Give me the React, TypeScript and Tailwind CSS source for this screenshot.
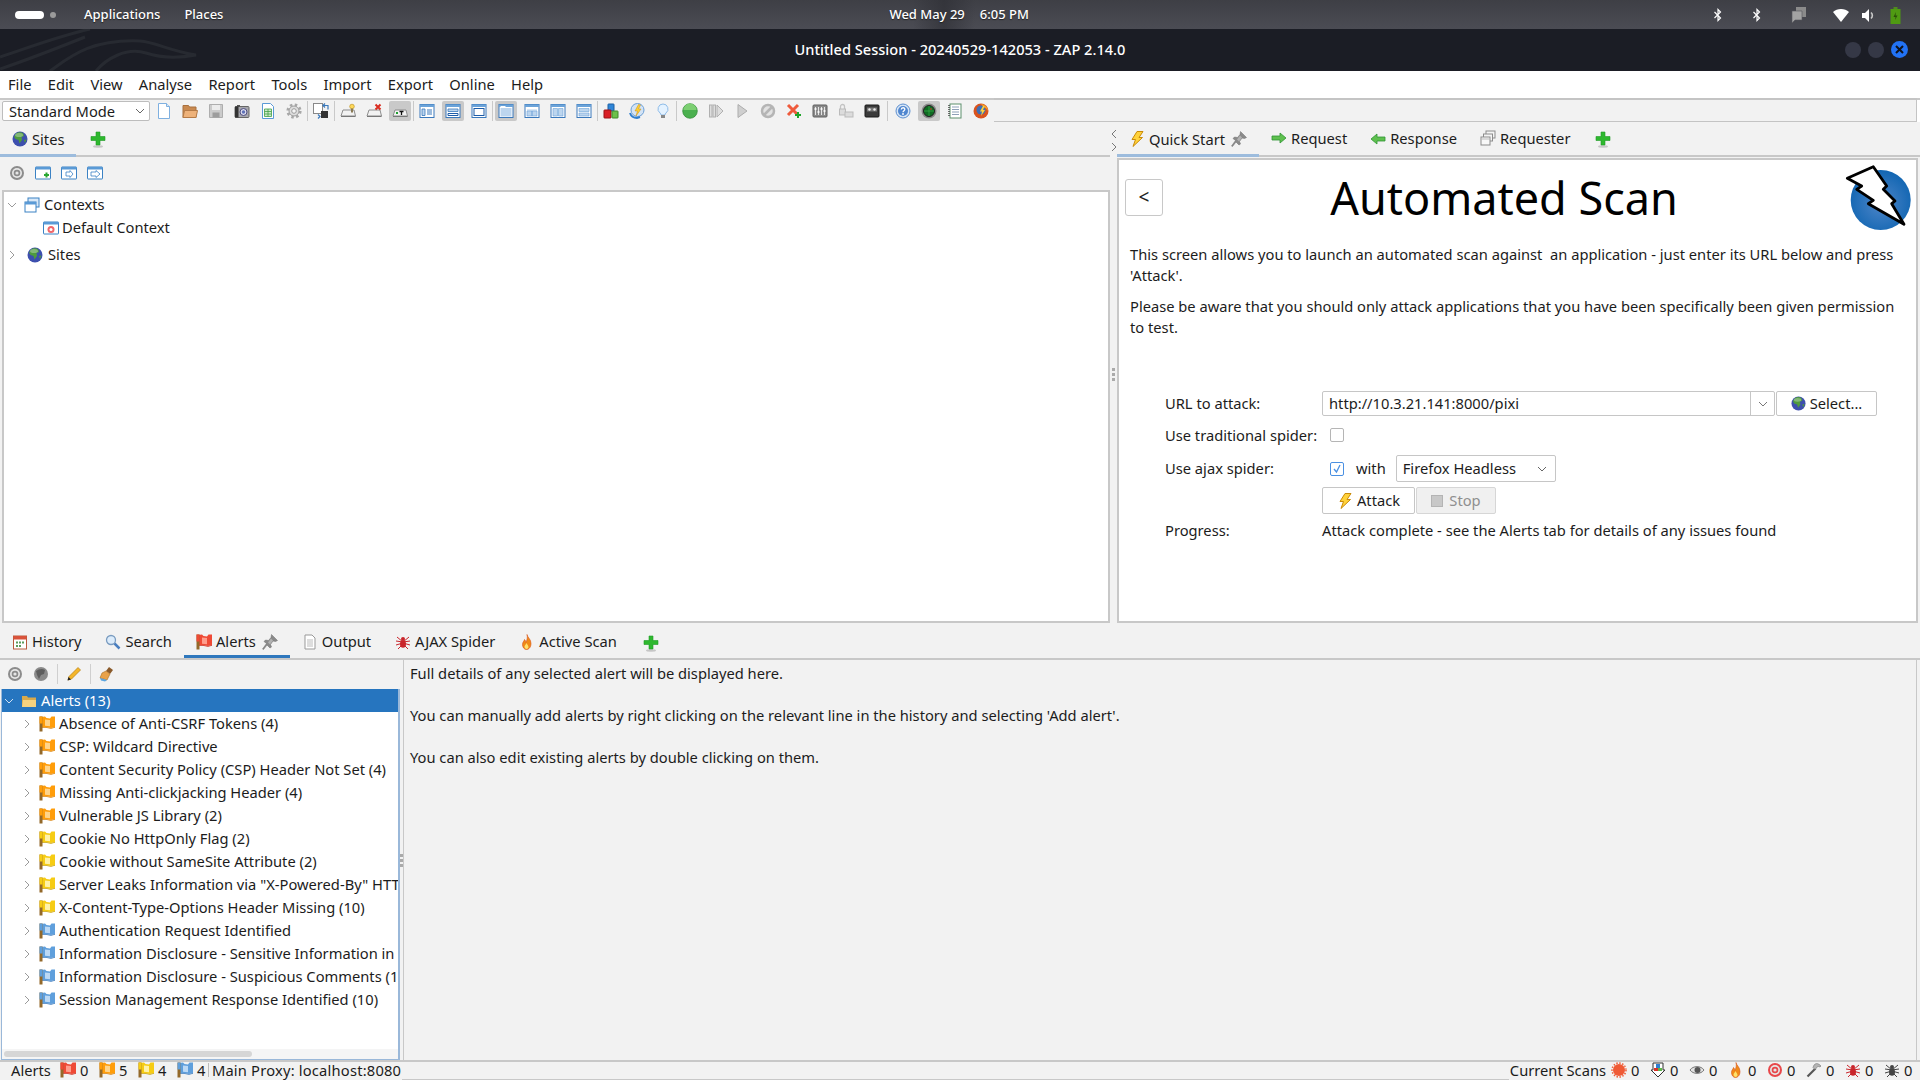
import type { ReactNode } from "react";

const Svg = ({ s = 16, children }: { s?: number; children: ReactNode }) => (
  <svg width={s} height={s} viewBox="0 0 16 16" className="shrink-0">
    {children}
  </svg>
);

const Flag = ({ c, d, pale }: { c: string; d: string; pale: string }) => (
  <Svg>
    <path d="M2 1L6 .5 7.500 2 11 2.500 12.500.5 16 .5V11l-4 1-5.500-1L2 11z" fill={c} />
    <path d="M6 3.500L11 4v6.300L6 9.700z" fill={pale} />
    <path d="M2 11l4.500 0 5.500 1 4-1v.8l-4 1-5.500-1H2z" fill={d} />
    <rect x=".5" y=".5" width="3" height="15" fill="#93692a" />
    <rect x=".5" y=".5" width="3" height="7" fill={c} />
  </Svg>
);

const Globe = ({ s = 16 }: { s?: number }) => (
  <Svg s={s}>
    <circle cx="8" cy="8" r="7.500" fill="#3d4fae" />
    <path d="M4 2.500c2-1.500 5-1.800 7-.5l1 3-2.500 1 .5 3-2.500 3.500-1-3.500-3-1-1.500-2.500z" fill="#4f9b3d" />
    <path d="M12 9l2.500-.5-1.500 3.500z" fill="#4f9b3d" />
    <ellipse cx="7" cy="4" rx="4" ry="2" fill="#fff" opacity=".3" />
  </Svg>
);

const Plus = () => (
  <svg width="16" height="17" viewBox="0 0 16 17" className="shrink-0">
    <ellipse cx="8" cy="15.500" rx="5" ry="1.200" fill="#999" opacity=".5" />
    <path d="M6 1h4v4.500h5v4h-5V14H6V9.500H1v-4h5z" fill="#2eb82e" stroke="#1f9a25" strokeWidth=".6" />
  </svg>
);

const Bolt = () => (
  <Svg>
    <path d="M8 .5h6L10 6.500h3.500L4 15.500l2.500-7H3z" fill="#ffd23a" stroke="#c98a08" strokeWidth="1" />
  </Svg>
);

const Pin = () => (
  <Svg>
    <path d="M9.500.5l6 6-2 1-2.500-.5-2.500 3.500 1 2.500L8 14l-3-3-3.500 4.500-1-.5 4-5.500L2 7.500 3.500 6l3 .5L9 3.500z" fill="#8a8a8a" stroke="#6d6d6d" strokeWidth=".5" />
    <path d="M9 4.500l2 2-3 4-2-2z" fill="#b2b2b2" />
  </Svg>
);

const Arrow = ({ left }: { left?: boolean }) => (
  <Svg>
    <path d={left ? "M1 8l6-5v3h8v4H7v3z" : "M15 8l-6-5v3H1v4h8v3z"} fill="#5fc04f" stroke="#2f9434" strokeWidth=".8" />
  </Svg>
);

const Requester = () => (
  <Svg>
    <rect x="6" y="1" width="9" height="7" fill="#f4f4f4" stroke="#8b8b8b" />
    <rect x="3.500" y="4" width="9" height="7" fill="#f4f4f4" stroke="#8b8b8b" />
    <rect x="1" y="7" width="9" height="8" fill="#f8f8f8" stroke="#8b8b8b" />
    <path d="M1 9h9" stroke="#bbb" />
  </Svg>
);

const Target = ({ s = 16, c = "#8c8c8c" }: { s?: number; c?: string }) => (
  <Svg s={s}>
    <circle cx="8" cy="8" r="7" fill={c} />
    <circle cx="8" cy="8" r="5" fill="#e6e6e6" />
    <circle cx="8" cy="8" r="3.300" fill={c} />
    <circle cx="8" cy="8" r="1.600" fill="#e6e6e6" />
  </Svg>
);

const Win = ({ children }: { children?: ReactNode }) => (
  <Svg>
    <rect x=".5" y="2" width="15" height="12" rx=".5" fill="#fff" stroke="#3b82c4" />
    <rect x=".5" y="2" width="15" height="2.500" fill="#5a9ad6" />
    {children}
  </Svg>
);

const Layout = ({ children }: { children?: ReactNode }) => (
  <Svg>
    <rect x="1" y="1.500" width="14" height="13" fill="#fff" stroke="#3a78bb" />
    <rect x="1" y="1.500" width="14" height="2.500" fill="#6ba3d9" />
    {children}
  </Svg>
);

const Tray = ({ children }: { children?: ReactNode }) => (
  <Svg>
    <path d="M3 7h11l1.500 6H1z" fill="#f2f2f2" stroke="#8d8d8d" />
    <path d="M1 13.500h14.500" stroke="#777" />
    {children}
  </Svg>
);

const Flame = () => (
  <Svg>
    <path d="M8 .5c.5 3 4 4.500 4 9 0 3.500-2 6-4.500 6S3.500 13 3.500 10.500C3.500 8 5 7.500 5.500 5.500 6.500 6.500 6.800 7.500 6.800 8.500 8 6.500 8.800 3.500 8 .5z" fill="#f08a18" stroke="#d9541a" strokeWidth=".6" />
    <path d="M7.500 9c.5 1.500 2 2.500 2 4 0 1.200-1 2-2 2s-2-1-2-2.200C5.500 11.500 7 10.500 7.500 9z" fill="#ffe16a" />
  </Svg>
);

const Spider = ({ c = "#c9252b" }: { c?: string }) => (
  <Svg>
    <path d="M8 8L2 3M8 8L1 7M8 9l-7 2M8 10l-5 5M8 8l6-5M8 8l7-1M8 9l7 2M8 10l5 5" stroke={c} strokeWidth="1" />
    <ellipse cx="8" cy="10" rx="3" ry="3.800" fill={c} />
    <circle cx="8" cy="5" r="2" fill={c} />
  </Svg>
);

const toolbarIcons: Record<string, ReactNode> = {
  doc: (
    <Svg>
      <path d="M2.500 .5h8l3 3v12h-11z" fill="#fff" stroke="#7fb0e0" />
      <path d="M10.500 .5v3h3" fill="#d7e7f7" stroke="#7fb0e0" />
    </Svg>
  ),
  folder: (
    <Svg>
      <path d="M1 2.500h5.500l1 1.500h6.500v10.500H1z" fill="#c98a50" stroke="#a9713f" />
      <path d="M1 14.500l1.500-7H15.500L14 14.500z" fill="#eeb27a" stroke="#b57b47" />
    </Svg>
  ),
  save: (
    <Svg>
      <path d="M1.500 1.500h13v13h-13z" fill="#cbcbcb" stroke="#aeaeae" />
      <rect x="4" y="2" width="8" height="5" fill="#ececec" />
      <rect x="4.500" y="9.500" width="7" height="5" fill="#9d9d9d" />
    </Svg>
  ),
  camera: (
    <Svg>
      <rect x="1" y="3.500" width="14" height="11" rx="1" fill="#a7a7ab" stroke="#666" />
      <rect x="3" y="2" width="3" height="2" fill="#555" />
      <rect x="1" y="3.500" width="3.500" height="11" fill="#333" />
      <circle cx="9.500" cy="9" r="3.500" fill="#dcdcec" stroke="#4b4b80" />
      <circle cx="9.500" cy="9" r="1.700" fill="#5f72b8" />
    </Svg>
  ),
  sheet: (
    <Svg>
      <path d="M2.500 .5h8l3 3v12h-11z" fill="#fff" stroke="#5a9ad6" />
      <path d="M4.500 6h7v7.500h-7zM4.500 8.500h7M4.500 11h7M8 6v7.500" fill="#cdeac8" stroke="#43a047" strokeWidth=".8" />
    </Svg>
  ),
  gear: (
    <Svg>
      <circle cx="8" cy="8" r="6.300" fill="none" stroke="#a8a8a8" strokeWidth="2.600" strokeDasharray="2.500 2.450" />
      <circle cx="8" cy="8" r="5" fill="#dedede" stroke="#9c9c9c" />
      <circle cx="8" cy="8" r="2.300" fill="#f5f5f5" stroke="#9c9c9c" />
    </Svg>
  ),
  swap: (
    <Svg>
      <rect x=".5" y=".5" width="9" height="10" fill="#fff" stroke="#888" />
      <rect x="8" y="8" width="7" height="7" fill="#333" />
      <path d="M12 .5l-2 2 2 2M10.500 2.500h4.500v4M5 15.500l2-2-2-2" fill="none" stroke="#3a78bb" strokeWidth="1.200" />
    </Svg>
  ),
  trayBulb: (
    <Tray>
      <circle cx="12" cy="3.500" r="2.300" fill="#ffd95a" stroke="#b98b12" strokeWidth=".6" />
      <rect x="11" y="5.500" width="2" height="4" fill="#8a7a55" />
    </Tray>
  ),
  trayX: (
    <Tray>
      <path d="M9.500 1.500l5 5M14.500 1.500l-5 5" stroke="#d92c20" strokeWidth="2" />
    </Tray>
  ),
  trayT: (
    <Tray>
      <rect x="4" y="9" width="2" height="2" fill="#1e9e2f" />
      <path d="M7.500 8.500h4M9.500 8.500v3.500" stroke="#111" strokeWidth="1.300" />
    </Tray>
  ),
  lay1: (
    <Layout>
      <path d="M3 6h3v6.500H3z" fill="#bcd5ee" stroke="#3a78bb" strokeWidth=".8" />
      <path d="M8 7h5M8 9h5M8 11h5" stroke="#3a78bb" strokeWidth="1" />
    </Layout>
  ),
  lay2: (
    <Layout>
      <path d="M3 6h10v2.500H3z" fill="#bcd5ee" stroke="#3a78bb" strokeWidth=".8" />
      <path d="M3 10.500h10v2H3z" fill="#fff" stroke="#1d5ca8" strokeWidth="1" />
    </Layout>
  ),
  lay3: (
    <Layout>
      <rect x="3" y="5.500" width="10" height="7" fill="#fff" stroke="#1d5ca8" />
    </Layout>
  ),
  lay4: (
    <Layout>
      <path d="M2.500 5h11v8.500h-11z" fill="#bcd5ee" />
      <path d="M2.500 3h5v2h-5z" fill="#fff" />
    </Layout>
  ),
  lay5: (
    <Layout>
      <path d="M3 6h10v7H3z" fill="#d9e7f5" />
      <path d="M8 8h5v5H8zM3 8h5v5H3z" fill="#bcd5ee" stroke="#6ba3d9" strokeWidth=".6" />
    </Layout>
  ),
  lay6: (
    <Layout>
      <path d="M3 5.500h4.500v7.500H3zM8.500 5.500H13v7.500H8.500z" fill="#bcd5ee" stroke="#6ba3d9" strokeWidth=".6" />
    </Layout>
  ),
  lay7: (
    <Layout>
      <path d="M3 5.500h10v3H3zM3 10h10v3H3z" fill="#bcd5ee" stroke="#6ba3d9" strokeWidth=".6" />
    </Layout>
  ),
  cubes: (
    <Svg>
      <rect x="5" y="1" width="6" height="7" rx=".5" fill="#2f86d8" stroke="#1c5fa3" />
      <rect x="1" y="7" width="7" height="8" rx=".5" fill="#d91f26" stroke="#9a1317" />
      <rect x="9" y="8" width="6" height="7" rx=".5" fill="#6cc04a" stroke="#3f8a2a" />
    </Svg>
  ),
  zapRefresh: (
    <Svg>
      <circle cx="8.500" cy="7" r="6.500" fill="#d3e3f5" stroke="#6a9fd6" />
      <path d="M9.500 1.500L6 8h2.500L7 13l5-7H9.500l2-4z" fill="#ffcf32" stroke="#c88f10" strokeWidth=".5" />
      <path d="M1 10c1 3 3.500 5 7 5l3-1" fill="none" stroke="#2f7fd0" strokeWidth="2" />
    </Svg>
  ),
  bulb: (
    <Svg>
      <path d="M8 1a5 5 0 00-3 9c.8.700 1 1.300 1 2h4c0-.7.200-1.300 1-2a5 5 0 00-3-9z" fill="#e4f2ff" stroke="#8fbce8" />
      <rect x="6" y="12" width="4" height="3" fill="#888" />
    </Svg>
  ),
  green: (
    <Svg>
      <circle cx="8" cy="8" r="7.300" fill="#4bb04f" stroke="#2f8a35" strokeWidth=".7" />
      <path d="M1.500 7a6.500 6.500 0 0113 0z" fill="#7ccf72" />
    </Svg>
  ),
  step: (
    <Svg>
      <rect x="1.500" y="2" width="2.500" height="12" fill="#dedede" stroke="#b0b0b0" />
      <rect x="5" y="2" width="2.500" height="12" fill="#dedede" stroke="#b0b0b0" />
      <path d="M9 2l6 6-6 6z" fill="#dedede" stroke="#b0b0b0" />
    </Svg>
  ),
  play: (
    <Svg>
      <path d="M4 1.500L13 8l-9 6.500z" fill="#cfcfcf" stroke="#adadad" />
    </Svg>
  ),
  forbid: (
    <Svg>
      <circle cx="8" cy="8" r="6" fill="#e2e2e2" stroke="#b5b5b5" strokeWidth="2.500" />
      <path d="M4 12l8-8" stroke="#b5b5b5" strokeWidth="2.500" />
    </Svg>
  ),
  xPlus: (
    <Svg>
      <path d="M2 2l10 10M12 2L2 12" stroke="#ef5b3c" strokeWidth="3" />
      <path d="M12 9v6M9 12h6" stroke="#1fa52a" strokeWidth="2" />
    </Svg>
  ),
  sliders: (
    <Svg>
      <rect x="1" y="2" width="14" height="12" rx="1" fill="#8a8a8a" stroke="#5f5f5f" />
      <path d="M3.500 4v8M6.500 4v8M9.500 4v8M12.500 4v8" stroke="#e6e6e6" strokeWidth="1" />
      <path d="M2.500 6h2M5.500 9h2M8.500 6h2M11.500 8h2" stroke="#fff" strokeWidth="1.500" />
    </Svg>
  ),
  locks: (
    <Svg>
      <path d="M2.500 6V3.500a2 2 0 014 0V6" fill="none" stroke="#c4c4c4" strokeWidth="1.300" />
      <rect x="1.500" y="6" width="6" height="6" fill="#dcdcdc" stroke="#bbb" />
      <rect x="7" y="9" width="8" height="5" fill="#dcdcdc" stroke="#bbb" />
    </Svg>
  ),
  tape: (
    <Svg>
      <rect x="1" y="2" width="14" height="12" rx="1" fill="#3b3b3b" stroke="#1a1a1a" />
      <rect x="3" y="4.500" width="10" height="4" fill="#777" />
      <circle cx="5.500" cy="6.500" r="1.200" fill="#eee" />
      <circle cx="10.500" cy="6.500" r="1.200" fill="#eee" />
    </Svg>
  ),
  help: (
    <Svg>
      <circle cx="8" cy="8" r="7" fill="#d7e5f5" stroke="#5c8fd0" />
      <circle cx="8" cy="8" r="5" fill="#4f86cf" />
      <path d="M6.300 6.500c0-2.300 3.500-2.300 3.500-.2 0 1.400-1.800 1.400-1.800 3" fill="none" stroke="#fff" strokeWidth="1.300" />
      <circle cx="8" cy="11" r=".9" fill="#fff" />
    </Svg>
  ),
  radar: (
    <Svg>
      <circle cx="8" cy="8" r="7.500" fill="#8a8a8a" />
      <circle cx="8" cy="8" r="5.500" fill="#0e6b22" stroke="#222" />
      <path d="M8 3v10M3 8h10" stroke="#39b34a" strokeWidth=".7" />
      <circle cx="10" cy="6" r=".8" fill="#e33" />
    </Svg>
  ),
  notes: (
    <Svg>
      <rect x="3" y="1" width="11" height="14" fill="#fff" stroke="#5d8f6d" />
      <path d="M5 4h7M5 6.500h7M5 9h7M5 11.500h7" stroke="#8da0b8" />
      <path d="M2 2v12" stroke="#444" strokeWidth="1.500" strokeDasharray="1 1" />
    </Svg>
  ),
  firefox: (
    <Svg>
      <circle cx="8" cy="8" r="7.500" fill="#d9531e" />
      <circle cx="8" cy="7" r="4.500" fill="#3f6fb5" />
      <path d="M8 1c4 .5 7 3 7 7-1-2-2-3-4-3.500z" fill="#f3a12a" />
      <path d="M10 3L7 8.500h2L8 13l4-6h-2l1.500-4z" fill="#ffd23a" />
    </Svg>
  ),
};

const toolbar = [
  "doc", "folder", "save", "camera", "sheet", "gear", "|", "swap", "|", "trayBulb", "trayX", "*trayT", "|",
  "lay1", "*lay2", "lay3", "|", "*lay4", "lay5", "lay6", "lay7", "|", "cubes", "zapRefresh", "bulb", "|",
  "green", "step", "play", "forbid", "xPlus", "sliders", "locks", "tape", "||", "help", "*radar", "notes", "firefox",
];

const alerts: [string, "o" | "y" | "b"][] = [
  ["Absence of Anti-CSRF Tokens (4)", "o"],
  ["CSP: Wildcard Directive", "o"],
  ["Content Security Policy (CSP) Header Not Set (4)", "o"],
  ["Missing Anti-clickjacking Header (4)", "o"],
  ["Vulnerable JS Library (2)", "o"],
  ["Cookie No HttpOnly Flag (2)", "y"],
  ["Cookie without SameSite Attribute (2)", "y"],
  ['Server Leaks Information via "X-Powered-By" HTTP Response Header Field(s) (10)', "y"],
  ["X-Content-Type-Options Header Missing (10)", "y"],
  ["Authentication Request Identified", "b"],
  ["Information Disclosure - Sensitive Information in URL (1)", "b"],
  ["Information Disclosure - Suspicious Comments (10)", "b"],
  ["Session Management Response Identified (10)", "b"],
];

const flags = {
  r: { c: "#ef4a36", d: "#c92a1c", pale: "#ff9d8c" },
  o: { c: "#ff9d0a", d: "#d97e00", pale: "#ffd48a" },
  y: { c: "#f6cc14", d: "#c79e00", pale: "#fff2a8" },
  b: { c: "#5f9fdc", d: "#3a78bb", pale: "#bcd9f5" },
};

const Chevron = ({ open, c = "#9a9a9a" }: { open?: boolean; c?: string }) => (
  <svg width="10" height="10" viewBox="0 0 10 10" className="shrink-0">
    <path d={open ? "M1 3l4 4 4-4" : "M3 1l4 4-4 4"} fill="none" stroke={c} strokeWidth="1" />
  </svg>
);

function Tab({ icon, label, extra, active, strong }: { icon?: ReactNode; label: string; extra?: ReactNode; active?: boolean; strong?: boolean }) {
  return (
    <div
      className={`flex items-center gap-[4px] px-3 pt-[2px] h-full border-b-[3px] ${
        active ? (strong ? "border-[#2f78bd]" : "border-[#9dbcdd]") : "border-transparent"
      }`}
    >
      {icon}
      <span className="whitespace-nowrap">{label}</span>
      {extra && <span className="ml-[2px]">{extra}</span>}
    </div>
  );
}

const BtIcon = ({ mr }: { mr: string }) => (
  <svg width="10" height="14" viewBox="0 0 10 14" className={mr}>
    <path d="M1.500 4l6 6L5 12.500v-11L7.500 4l-6 6" fill="none" stroke="#fff" strokeWidth="1.200" />
  </svg>
);

const TopBar = () => (
  <div className="relative h-[29px] shrink-0 flex items-center pt-[1px] bg-gradient-to-b from-[#3e3f45] to-[#4b4c54] text-white text-[13px] font-medium [text-shadow:0_1px_1px_#222]">
    <div className="absolute left-[913px] top-0 h-full w-[62px] bg-gradient-to-r from-transparent via-[#2f3036] to-transparent opacity-70" />
    <div className="ml-[15px] w-[29px] h-[8px] rounded-full bg-white" />
    <div className="ml-[6px] w-[6px] h-[6px] rounded-full bg-[#9a9a9a]" />
    <span className="ml-[28px]">Applications</span>
    <span className="ml-[24px]">Places</span>
    <span className="relative ml-[666px]">Wed May 29</span>
    <span className="relative ml-[15px]">6:05 PM</span>
    <div className="ml-auto mr-[19px] flex items-center gap-[12px]">
      <BtIcon mr="mr-[17px]" />
      <BtIcon mr="mr-[17px]" />
      <svg width="16" height="18" viewBox="0 0 16 18" className="mr-[14px]"><path d="M5 1h10v10H5z" fill="#8b8b8b" /><path d="M1 5h10v9H4l-3 3z" fill="#a3a3a3" stroke="#55565c" strokeWidth=".6" /></svg>
      <svg width="16" height="16" viewBox="0 0 16 16"><path d="M0 5c4-4 12-4 16 0l-8 10z" fill="#fff" /></svg>
      <svg width="15" height="15" viewBox="0 0 15 15"><path d="M1 5h3l4-4v13l-4-4H1z" fill="#fff" /><path d="M10 4.500a4 4 0 010 6" fill="none" stroke="#c9c9c9" strokeWidth="1.600" /></svg>
      <svg width="11" height="17" viewBox="0 0 11 17" className="ml-[2px]"><rect x="3.500" y="0" width="4" height="2" fill="#4f8a1e" /><rect x=".5" y="2" width="10" height="15" fill="#4f9a12" /><path d="M6 5L3.500 10H5.500L5 13l2.500-4.500H5.500z" fill="#2b4f0a" /></svg>
    </div>
  </div>
);

const TitleBar = () => (
  <div className="relative h-[42px] shrink-0 flex items-center justify-center pb-[1px] bg-[#1b1d25] text-white text-[14.6px] font-medium overflow-hidden">
    <svg width="210" height="42" viewBox="0 0 210 42" className="absolute left-0 top-0">
      <path d="M0 28C25 20 55 8 90 0M0 40C30 30 60 18 85 8M50 42C70 28 90 10 140 12c15 1 30 10 56 14-22 4-38 2-50-2-20-6-40 6-50 18" fill="none" stroke="#272a31" strokeWidth="3" />
    </svg>
    <span>Untitled Session - 20240529-142053 - ZAP 2.14.0</span>
    <div className="absolute right-[12px] flex items-center gap-[7px]">
      <div className="w-[16px] h-[16px] rounded-full bg-[#353846]" />
      <div className="w-[16px] h-[16px] rounded-full bg-[#353846]" />
      <div className="w-[17px] h-[17px] rounded-full bg-[#2272f4] flex items-center justify-center">
        <svg width="9" height="9" viewBox="0 0 9 9"><path d="M1 1l7 7M8 1L1 8" stroke="#10131a" strokeWidth="2" /></svg>
      </div>
    </div>
  </div>
);

const MenuBar = () => (
  <div className="h-[27px] shrink-0 bg-white flex items-center gap-[16.3px] pl-2 pb-[1px]">
    {["File", "Edit", "View", "Analyse", "Report", "Tools", "Import", "Export", "Online", "Help"].map((m) => (
      <span key={m}>{m}</span>
    ))}
  </div>
);

const Toolbar = () => (
  <div className="h-[24px] shrink-0 bg-white border-t-2 border-[#c8c8c8] flex">
    <div className="flex items-center bg-[#f2f2f2] h-[22px] pl-[2px]">
      <div className="w-[148px] h-[20px] bg-white border border-[#bdbdbd] rounded-[2px] flex items-center justify-between pl-[6px] pr-[4px] shrink-0 mr-[1px]">
        <span>Standard Mode</span>
        <Chevron open c="#666" />
      </div>
      {toolbar.map((t, i) => {
        if (t === "|") return <div key={i} className="w-[1px] h-[20px] bg-[#c9c9c9] shrink-0" />;
        if (t === "||") return <div key={i} className="w-[1px] h-[20px] mx-[2px] bg-[#c9c9c9] shrink-0" />;
        const hl = t.startsWith("*");
        return (
          <div key={i} className="w-[26px] h-[20px] flex items-center justify-center shrink-0">
            <div className={`w-[22px] h-[20px] flex items-center justify-center rounded-[2px] ${hl ? "bg-[#c9c9c9]" : ""}`}>
              {toolbarIcons[hl ? t.slice(1) : t]}
            </div>
          </div>
        );
      })}
    </div>
    <div className="flex-1 mr-[3px] h-[24px] -mt-[2px] bg-[#f2f2f2] border-t-2 border-b border-r border-[#c4c4c4]" />
  </div>
);

const Sites = () => (
  <div className="w-[1110px] shrink-0 flex flex-col">
    <div className="h-[35px] flex border-b-[2px] border-[#c8c8c8] shrink-0">
      <div className="-mb-[2px] h-[35px]">
        <Tab icon={<Globe />} label="Sites" active />
      </div>
      <div className="ml-[2px] px-3 pt-[2px] flex items-center"><Plus /></div>
    </div>
    <div className="h-[33px] shrink-0 flex items-center pl-[9px] pb-[2px] gap-[10px]">
      <Target />
      <Win><path d="M9 10h5M11.500 7.500v5" stroke="#2aa832" strokeWidth="2" /></Win>
      <Win><path d="M5 7h4V5.500L12 9l-3 3.500V11H5z" fill="#fff" stroke="#3b82c4" strokeWidth=".8" /></Win>
      <Win><path d="M4 7h5V5.500L13 9l-4 3.500V11H4z" fill="#fff" stroke="#3b82c4" strokeWidth=".8" /></Win>
    </div>
    <div className="flex-1 ml-[2px] bg-white border-2 border-[#c8c8c8] pt-[1px]">
      <div className="h-[23px] flex items-center pl-[3px]">
        <Chevron open />
        <span className="ml-[7px]">
          <Svg>
            <rect x="4" y="1" width="11" height="9" fill="#d8e8f8" stroke="#3b82c4" />
            <rect x="1" y="5" width="11" height="10" fill="#fff" stroke="#3b82c4" />
            <rect x="1" y="5" width="11" height="2.500" fill="#5a9ad6" />
          </Svg>
        </span>
        <span className="ml-[4px]">Contexts</span>
      </div>
      <div className="h-[23px] flex items-center pl-[39px]">
        <Win><circle cx="8" cy="9.500" r="3.500" fill="#f0666a" /><circle cx="8" cy="9.500" r="1.500" fill="#fff" /></Win>
        <span className="ml-[3px]">Default Context</span>
      </div>
      <div className="h-[23px] mt-[4px] flex items-center pl-[3px]">
        <Chevron />
        <span className="ml-[10px]"><Globe /></span>
        <span className="ml-[5px]">Sites</span>
      </div>
    </div>
  </div>
);

function QuickStart() {
  return (
    <div className="flex-1 flex flex-col min-w-0">
      <div className="h-[35px] shrink-0 flex border-b-[2px] border-[#c8c8c8]">
        <div className="-mb-[2px] h-[35px]"><Tab icon={<Bolt />} label="Quick Start" extra={<Pin />} active /></div>
        <Tab icon={<Arrow />} label="Request" />
        <div className="pt-[1px] -ml-[1px]"><Tab icon={<Arrow left />} label="Response" /></div>
        <div className="-ml-[1px]"><Tab icon={<Requester />} label="Requester" /></div>
        <div className="ml-[1px] px-3 pt-[2px] flex items-center"><Plus /></div>
      </div>
      <div className="flex-1 mt-[1px] mr-[2px] bg-white border-2 border-[#c8c8c8] pt-[3px] flex flex-col">
        <div className="h-[70px] flex items-center shrink-0 pl-[6px] pr-[1px]">
          <button className="w-[38px] h-[37px] -mt-[2px] border border-[#c8c8c8] rounded-[3px] text-[19px] text-[#222] shrink-0">&lt;</button>
          <div className="flex-1 text-center text-[45px] leading-none text-black pb-[2px]">Automated Scan</div>
          <svg width="70" height="70" viewBox="0 0 70 70" className="shrink-0">
            <defs>
              <radialGradient id="zapblue" cx="50%" cy="55%" r="60%">
                <stop offset="0%" stopColor="#4f86c9" />
                <stop offset="100%" stopColor="#0c63b0" />
              </radialGradient>
            </defs>
            <circle cx="35.700" cy="37" r="30" fill="url(#zapblue)" />
            <path d="M2.300 15.300L28.300 3.700 41.700 23 38.300 26.300 50 38 46.700 40.700 59 61.300 23.300 40.700 28.300 37.300 11.700 26.300 16.700 23z" fill="#fff" stroke="#000" strokeWidth="2.800" strokeLinejoin="round" />
          </svg>
        </div>
        <div className="mt-[11px] pl-[11px] leading-[21px] whitespace-pre">
          <div>{"This screen allows you to launch an automated scan against  an application - just enter its URL below and press"}</div>
          <div>'Attack'.</div>
          <div className="mt-[10px]">Please be aware that you should only attack applications that you have been specifically been given permission</div>
          <div>to test.</div>
        </div>
        <div className="mt-[53px] pl-[46px]">
          <div className="flex items-center h-[25px]">
            <span className="w-[157px]">URL to attack:</span>
            <div className="w-[453px] h-[25px] bg-white border border-[#c6c6c6] rounded-[2px] flex items-center pl-[6px]">
              <span className="flex-1">http://10.3.21.141:8000/pixi</span>
              <div className="w-[24px] h-full border-l border-[#c6c6c6] flex items-center justify-center"><Chevron open c="#777" /></div>
            </div>
            <div className="ml-[1px] w-[101px] h-[25px] bg-white border border-[#c6c6c6] rounded-[2px] flex items-center justify-center gap-[4px]">
              <Globe s={15} />
              <span>Select...</span>
            </div>
          </div>
          <div className="flex items-center h-[14px] mt-[12px]">
            <span className="w-[165px] whitespace-nowrap">Use traditional spider:</span>
            <div className="w-[14px] h-[14px] bg-white border border-[#b5b5b5] rounded-[2px]" />
          </div>
          <div className="flex items-center h-[27px] mt-[13px]">
            <span className="w-[165px]">Use ajax spider:</span>
            <div className="w-[14px] h-[14px] bg-white border border-[#4a90e2] rounded-[2px] flex items-center justify-center">
              <svg width="10" height="10" viewBox="0 0 10 10"><path d="M2 5l2.500 3L8 1" fill="none" stroke="#4a90e2" strokeWidth="1.300" /></svg>
            </div>
            <span className="ml-[12px]">with</span>
            <div className="ml-[10px] w-[160px] h-[27px] bg-white border border-[#c6c6c6] rounded-[2px] flex items-center justify-between pl-[6px] pr-[8px]">
              <span>Firefox Headless</span>
              <Chevron open c="#666" />
            </div>
          </div>
          <div className="flex h-[27px] mt-[5px] pl-[157px]">
            <div className="w-[93px] border border-[#c6c6c6] rounded-[2px] bg-white flex items-center justify-center gap-[4px]">
              <Bolt />
              <span>Attack</span>
            </div>
            <div className="ml-[1px] w-[80px] border border-[#d6d6d6] rounded-[2px] bg-[#f0f0f0] text-[#8f8f8f] flex items-center justify-center gap-[6px]">
              <div className="w-[12px] h-[12px] bg-[#c8c8c8] border border-[#b4b4b4]" />
              <span>Stop</span>
            </div>
          </div>
          <div className="flex mt-[6px] leading-[21px]">
            <span className="w-[157px]">Progress:</span>
            <span>Attack complete - see the Alerts tab for details of any issues found</span>
          </div>
        </div>
      </div>
    </div>
  );
}

const BottomTabs = () => (
  <div className="h-[37px] shrink-0 flex border-b-[2px] border-[#c8c8c8] pt-[3px]">
    <Tab
      icon={
        <Svg>
          <rect x="1.500" y="2" width="13" height="13" fill="#fff" stroke="#b85a3c" />
          <rect x="1.500" y="2" width="13" height="3.500" fill="#d9533b" />
          <path d="M4 7.500h2v2H4zM7 7.500h2v2H7zM10 7.500h2v2h-2zM4 11h2v2H4zM7 11h2v2H7z" fill="#5b9b5b" />
        </Svg>
      }
      label="History"
    />
    <Tab
      icon={
        <Svg>
          <circle cx="6" cy="6" r="4.500" fill="#dcecfb" stroke="#7a9cc0" strokeWidth="1.300" />
          <path d="M9.500 9.500l5 5" stroke="#4a7fc0" strokeWidth="2.500" />
        </Svg>
      }
      label="Search"
    />
    <Tab icon={<Flag {...flags.r} />} label="Alerts" extra={<Pin />} active strong />
    <Tab
      icon={
        <Svg>
          <path d="M3 1h7l3 3v11H3z" fill="#fff" stroke="#999" />
          <path d="M5 6h6M5 8h6M5 10h6M5 12h6" stroke="#bbb" />
        </Svg>
      }
      label="Output"
    />
    <Tab icon={<Spider />} label="AJAX Spider" />
    <Tab icon={<Flame />} label="Active Scan" />
    <div className="ml-[2px] px-3 pt-[2px] flex items-center"><Plus /></div>
  </div>
);

const AlertsTree = () => (
  <div className="w-[400px] shrink-0 flex flex-col">
    <div className="h-[29px] shrink-0 flex items-center pl-[7px] pb-[1px]">
      <Target />
      <span className="ml-[10px]">
        <Svg>
          <circle cx="8" cy="8" r="7" fill="#8a8a8a" />
          <path d="M3 5c3-2 6-3 9-1l-1 4-3 1-2 4-2-4z" fill="#5e5e5e" />
        </Svg>
      </span>
      <div className="ml-[8px] w-[1px] h-[20px] bg-[#cfcfcf]" />
      <span className="ml-[8px]">
        <Svg>
          <path d="M3 10.500L12 1.500l2.500 2.500-9 9-3.500 1z" fill="#f4b62a" stroke="#b57e10" strokeWidth=".7" />
          <path d="M2.500 11l2.500 2.500-3.500 1z" fill="#222" />
        </Svg>
      </span>
      <div className="ml-[8px] w-[1px] h-[20px] bg-[#cfcfcf]" />
      <span className="ml-[8px]">
        <Svg>
          <path d="M10 1l4 3-3 4-4-3z" fill="#8a5a2a" />
          <path d="M7 5l4 3-3 6-7-2 2-5z" fill="#e8a24a" stroke="#a86d20" strokeWidth=".6" />
          <path d="M1 12l7 2-2 1.500-4-1z" fill="#5aa5e0" />
        </Svg>
      </span>
    </div>
    <div className="flex-1 ml-[1px] bg-white border-r-2 border-b-2 border-l border-[#9ab8d9] overflow-hidden flex flex-col">
      <div className="h-[23px] shrink-0 flex items-center bg-[#2675bf] text-white pl-[2px]">
        <Chevron open c="#cfe0f2" />
        <span className="ml-[7px]">
          <Svg>
            <path d="M1 3h5l1 1.500h8V14H1z" fill="#d9a94a" />
            <path d="M1 14l1-7h13l0 7z" fill="#f6d27f" />
          </Svg>
        </span>
        <span className="ml-[4px]">Alerts (13)</span>
      </div>
      <div className="flex-1">
        {alerts.map(([t, c]) => (
          <div key={t} className="h-[23px] flex items-center pl-[20px] whitespace-nowrap">
            <Chevron />
            <span className="ml-[7px]"><Flag {...flags[c]} /></span>
            <span className="ml-[4px]">{t}</span>
          </div>
        ))}
      </div>
      <div className="h-[10px] shrink-0 bg-[#f5f5f5] flex items-center pl-[2px]">
        <div className="w-[248px] h-[6px] rounded-full bg-[#d6d6d6]" />
      </div>
    </div>
  </div>
);

const statusIcons: ReactNode[] = [
  <Svg key="burst">
    <circle cx="8" cy="8" r="6" fill="#ef5a36" />
    <circle cx="8" cy="8" r="7" fill="none" stroke="#ef5a36" strokeWidth="1.500" strokeDasharray="1.500 1.500" />
  </Svg>,
  <Svg key="down">
    <path d="M3 1h10v7h2l-7 7-7-7h2z" fill="#fff" stroke="#333" />
    <rect x="6" y="2" width="4" height="4" fill="#2f7fd0" />
    <rect x="4" y="6" width="4" height="3" fill="#d9302a" />
    <rect x="8" y="6" width="4" height="3" fill="#5cb84a" />
  </Svg>,
  <Svg key="eye">
    <path d="M1 8c3-4.500 11-4.500 14 0-3 4.500-11 4.500-14 0z" fill="#e2e2e2" stroke="#777" />
    <circle cx="8.500" cy="8" r="3" fill="#555" />
  </Svg>,
  <Flame key="flame" />,
  <Target key="target" c="#e8474a" />,
  <Svg key="hammer">
    <path d="M1.500 14.500l8-8" stroke="#555" strokeWidth="2.200" />
    <path d="M8 3c2-2 4-2 7 1l-1 1c-2-1-3-.5-3.500 1L9 7.500 7 5.500z" fill="#b5b5b5" stroke="#777" strokeWidth=".6" />
  </Svg>,
  <Spider key="spider" />,
  <Spider key="spider2" c="#444" />,
];

const StatusBar = () => (
  <div className="h-[20px] shrink-0 flex items-center pb-[2px] border-t-2 border-[#c8c8c8] -mt-[1px] whitespace-nowrap">
    <span className="ml-[11px]">Alerts</span>
    <span className="ml-[9px]"><Flag {...flags.r} /></span>
    <span className="ml-[4px] w-[19px]">0</span>
    <Flag {...flags.o} />
    <span className="ml-[4px] w-[19px]">5</span>
    <Flag {...flags.y} />
    <span className="ml-[4px] w-[19px]">4</span>
    <Flag {...flags.b} />
    <span className="ml-[4px] w-[11px]">4</span>
    <div className="w-[1px] h-[14px] bg-[#bbb] mr-[3px]" />
    <span className="tracking-[0.2px]">Main Proxy: localhost:8080</span>
    <div className="flex-1 h-[18px] -mb-[2px] border-b border-[#c8c8c8] mx-[1px]" />
    <span className="-mr-[1px]">Current Scans</span>
    <div className="flex mr-[3px]">
      {statusIcons.map((icon, i) => (
        <div key={i} className="w-[39px] flex items-center justify-end pr-[4px] gap-[4px]">
          {icon}
          <span className="w-[9px]">0</span>
        </div>
      ))}
    </div>
  </div>
);

const Dots = () => (
  <div className="flex flex-col gap-[2px]">
    <div className="w-[3px] h-[3px] bg-[#aaa]" />
    <div className="w-[3px] h-[3px] bg-[#aaa]" />
    <div className="w-[3px] h-[3px] bg-[#aaa]" />
  </div>
);

export default function App() {
  return (
    <div className="w-[1920px] h-[1080px] overflow-hidden flex flex-col bg-[#f2f2f2] text-[#1c1c1c] text-[14.7px] font-['Noto_Sans',sans-serif]">
      <TopBar />
      <TitleBar />
      <MenuBar />
      <Toolbar />
      {/* upper split */}
      <div className="h-[501px] shrink-0 flex">
        <Sites />
        <div className="w-[7px] shrink-0 relative">
          <svg width="7" height="24" viewBox="0 0 7 24" className="absolute top-[7px] left-[1px]">
            <path d="M5 1L1 5l4 4M1 14l4 4-4 4" fill="none" stroke="#777" />
          </svg>
          <div className="absolute top-[246px] left-[2px]"><Dots /></div>
        </div>
        <QuickStart />
      </div>
      <BottomTabs />
      {/* lower split */}
      <div className="flex-1 min-h-0 flex">
        <AlertsTree />
        <div className="w-[3px] shrink-0 relative">
          <div className="absolute top-[194px] left-0"><Dots /></div>
        </div>
        <div className="flex-1 mr-[3px] border-l border-r border-b border-[#c8c8c8] pl-[6px] pt-[3px] leading-[21px]">
          <div>Full details of any selected alert will be displayed here.</div>
          <div className="mt-[21px]">You can manually add alerts by right clicking on the relevant line in the history and selecting 'Add alert'.</div>
          <div className="mt-[21px]">You can also edit existing alerts by double clicking on them.</div>
        </div>
      </div>
      <StatusBar />
    </div>
  );
}
